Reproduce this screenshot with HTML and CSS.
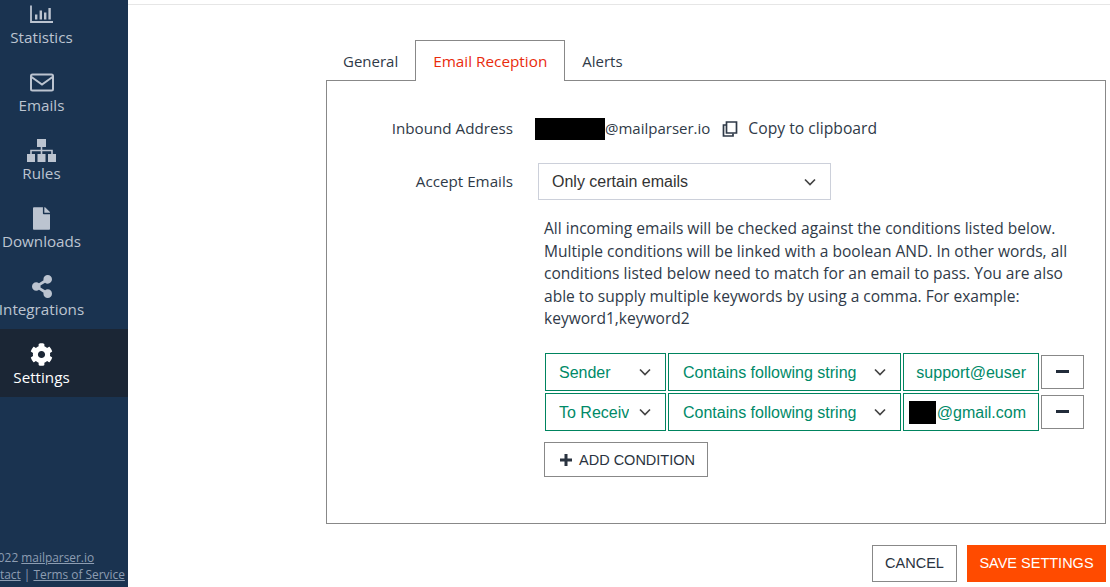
FILE: index.html
```html
<!DOCTYPE html>
<html>
<head>
    <meta charset="UTF-8">
    <title>Mailparser - Settings</title>
    <link rel="stylesheet" href="styles.css">
</head>
<body>
    <div class="app">
        <nav class="sidebar">
            <a class="nav-item">
                <svg class="nav-icon" width="24" height="18" viewBox="0 0 24 18"><path d="M1 0v16.500h22" fill="none" stroke="currentColor" stroke-width="1.800"/><path d="M5 9h2.400v5H5zM9.600 5h2.400v9H9.600zM14 7h2.400v7H14zM18.400 2.500h2.400V14h-2.400z" fill="currentColor"/></svg>
                <span>Statistics</span>
            </a>
            <a class="nav-item">
                <svg class="nav-icon" width="24" height="18" viewBox="0 0 24 18"><rect x="1" y="1" width="22" height="16" rx="1.500" fill="none" stroke="currentColor" stroke-width="2"/><path d="M1.500 3.500l10.500 7.500 10.500-7.500" fill="none" stroke="currentColor" stroke-width="2"/></svg>
                <span>Emails</span>
            </a>
            <a class="nav-item">
                <svg class="nav-icon" width="29" height="23" viewBox="0 0 29 23"><path d="M10 0h9v8h-9zM0 15h8v8H0zM10.500 15h8v8h-8zM21 15h8v8h-8z" fill="currentColor"/><path d="M14.500 8v7M4 15v-3.500h21V15" fill="none" stroke="currentColor" stroke-width="1.600"/></svg>
                <span>Rules</span>
            </a>
            <a class="nav-item">
                <svg class="nav-icon" width="17" height="23" viewBox="0 0 384 512"><path fill="currentColor" d="M224 136V0H24C10.700 0 0 10.700 0 24v464c0 13.300 10.700 24 24 24h336c13.300 0 24-10.700 24-24V160H248c-13.200 0-24-10.800-24-24zm160-14.100v6.100H256V0h6.100c6.400 0 12.500 2.500 17 7l97.900 98c4.500 4.500 7 10.600 7 16.900z"/></svg>
                <span>Downloads</span>
            </a>
            <a class="nav-item">
                <svg class="nav-icon" width="20" height="23" viewBox="0 0 448 512"><path fill="currentColor" d="M352 320c-22.608 0-43.387 7.819-59.790 20.895l-102.486-64.054a96.551 96.551 0 0 0 0-41.683l102.486-64.054C308.613 184.181 329.392 192 352 192c53.019 0 96-42.981 96-96S405.019 0 352 0s-96 42.981-96 96c0 7.158.79 14.130 2.276 20.841L155.790 180.895C139.387 167.819 118.608 160 96 160c-53.019 0-96 42.981-96 96s42.981 96 96 96c22.608 0 43.387-7.819 59.790-20.895l102.486 64.054A96.301 96.301 0 0 0 256 416c0 53.019 42.981 96 96 96s96-42.981 96-96-42.981-96-96-96z"/></svg>
                <span>Integrations</span>
            </a>
            <a class="nav-item active">
                <svg class="nav-icon" width="23" height="23" viewBox="0 0 512 512"><path fill="currentColor" d="M487.400 315.700l-42.600-24.600c4.300-23.200 4.300-47 0-70.200l42.600-24.600c4.900-2.800 7.100-8.600 5.500-14-11.100-35.600-30-67.800-54.700-94.600-3.800-4.100-10-5.100-14.800-2.300L380.800 110c-17.900-15.400-38.500-27.300-60.800-35.100V25.800c0-5.600-3.900-10.500-9.400-11.700-36.700-8.200-74.300-7.800-109.200 0-5.500 1.200-9.400 6.100-9.400 11.700V75c-22.200 7.900-42.800 19.800-60.800 35.100L88.700 85.500c-4.900-2.800-11-1.900-14.800 2.300-24.700 26.700-43.600 58.900-54.700 94.600-1.700 5.400.6 11.200 5.500 14L67.300 221c-4.300 23.200-4.300 47 0 70.200l-42.600 24.600c-4.900 2.800-7.100 8.600-5.500 14 11.100 35.600 30 67.800 54.700 94.600 3.800 4.100 10 5.100 14.800 2.300l42.600-24.600c17.900 15.400 38.500 27.300 60.800 35.100v49.200c0 5.600 3.900 10.500 9.400 11.700 36.700 8.200 74.300 7.800 109.200 0 5.500-1.200 9.400-6.100 9.400-11.700v-49.200c22.200-7.900 42.800-19.800 60.800-35.100l42.600 24.600c4.900 2.800 11 1.900 14.800-2.300 24.700-26.700 43.600-58.900 54.700-94.600 1.500-5.500-.7-11.300-5.600-14.100zM256 336c-44.100 0-80-35.900-80-80s35.900-80 80-80 80 35.900 80 80-35.900 80-80 80z"/></svg>
                <span>Settings</span>
            </a>
            <div class="sidebar-footer">
                <div>&copy; 2022 <a href="#">mailparser.io</a></div>
                <div><a href="#">Contact</a> | <a href="#">Terms of Service</a></div>
            </div>
        </nav>

        <main class="content">
            <div class="tabs">
                <a class="tab">General</a>
                <a class="tab active">Email Reception</a>
                <a class="tab">Alerts</a>
            </div>

            <section class="panel">
                <div class="form-row">
                    <div class="form-label inbound-label">Inbound Address</div>
                    <div class="address">
                        <span class="redacted redacted-address"></span><span class="address-text">@mailparser.io</span>
                        <a class="copy-link">
                            <svg width="16" height="16" viewBox="0 0 16 16"><path d="M4.500 1h10v11h-10z" fill="none" stroke="currentColor" stroke-width="1.700"/><path d="M4 4H1.500v11h9.500v-2.500" fill="none" stroke="currentColor" stroke-width="1.700"/></svg>
                            <span>Copy to clipboard</span>
                        </a>
                    </div>
                </div>

                <div class="form-row accept-row">
                    <div class="form-label accept-label">Accept Emails</div>
                    <select class="accept-select">
                        <option>Only certain emails</option>
                    </select>
                </div>

                <p class="help-text">All incoming emails will be checked against the conditions listed below. Multiple conditions will be linked with a boolean AND. In other words, all conditions listed below need to match for an email to pass. You are also able to supply multiple keywords by using a comma. For example: keyword1,keyword2</p>

                <div class="conditions">
                    <div class="condition">
                        <select class="cond-field"><option>Sender</option></select>
                        <select class="cond-type"><option>Contains following string</option></select>
                        <div class="cond-value">support@euser</div>
                        <button class="remove-btn" type="button"><span class="minus"></span></button>
                    </div>
                    <div class="condition">
                        <select class="cond-field"><option>To Receiver</option></select>
                        <select class="cond-type"><option>Contains following string</option></select>
                        <div class="cond-value"><span class="redacted redacted-value"></span>@gmail.com</div>
                        <button class="remove-btn" type="button"><span class="minus"></span></button>
                    </div>
                </div>

                <button class="add-btn" type="button">
                    <svg width="14" height="14" viewBox="0 0 14 14"><path d="M7 1v12M1 7h12" stroke="currentColor" stroke-width="3"/></svg>
                    ADD CONDITION
                </button>
            </section>

            <div class="actions">
                <button class="cancel-btn" type="button">CANCEL</button>
                <button class="save-btn" type="button">SAVE SETTINGS</button>
            </div>
        </main>
    </div>
</body>
</html>
```

FILE: styles.css
```css
html, body { margin: 0; height: 100%; overflow: hidden; }
body { background: #fff; font-family: "Open Sans", "Noto Sans", sans-serif; font-size: 15.2px; color: #2f3a48; }
.app { display: flex; height: 587px; }

.sidebar {
    width: 128px; flex: none; background: #1a3350; color: #bcc4d0;
    display: flex; flex-direction: column; overflow: hidden;
}
.nav-item {
    height: 68px; flex: none; box-sizing: border-box; padding: 14px 45px 0 0;
    display: flex; flex-direction: column; align-items: center; justify-content: flex-start;
    white-space: nowrap;
}
.nav-item:first-child { margin-top: -11px; }
.nav-icon { height: 23px; display: block; margin-bottom: 1px; }
.nav-item span { line-height: 20px; }
.nav-item.active { background: #1b2635; color: #fff; }
.sidebar-footer {
    margin-top: auto; margin-left: -22px; padding-bottom: 4px;
    font-size: 11.9px; line-height: 17px; white-space: nowrap; color: #8d9db2;
}
.sidebar-footer a { color: #8d9db2; text-decoration: underline; }

.content { flex: 1; margin-top: 4px; border-top: 1px solid #e6e6e6; padding: 35px 4px 0 198px; min-width: 0; }

.tabs { display: flex; margin-bottom: -1px; }
.tab { padding: 0 16px; height: 40px; line-height: 40px; font-size: 15px; border: 1px solid transparent; border-bottom: 0; }
.tab.active { padding: 0 17px; font-size: 15.3px; color: #e92b0c; background: #fff; border-color: #888; position: relative; z-index: 1; }

.panel { border: 1px solid #888; padding: 37px 0 46px 0; }
.form-row { display: flex; align-items: center; }
.form-label { width: 186px; text-align: right; margin-right: 22px; flex: none; }
.inbound-label, .address-text, .copy-link span { padding-bottom: 2px; }
.accept-label { padding-bottom: 1px; }
.address { display: flex; align-items: center; height: 22px; color: #2f3a48; }
.address-text { font-size: 15px; }
.redacted { display: inline-block; background: #000; }
.redacted-address { width: 70px; height: 22px; }
.copy-link { display: flex; align-items: center; gap: 10px; margin-left: 12px; }
.copy-link span { font-size: 15.7px; }

select {
    appearance: none; border-radius: 0; background-color: #fff; font-family: "Liberation Sans", Arial, sans-serif;
    font-size: 16px; outline: none;
    background-image: url("data:image/svg+xml,%3Csvg xmlns='http://www.w3.org/2000/svg' width='12' height='8' viewBox='0 0 12 8'%3E%3Cpath d='M1 1.500l5 5 5-5' fill='none' stroke='%23444' stroke-width='1.700'/%3E%3C/svg%3E");
    background-repeat: no-repeat;
}
.accept-row { margin-top: 23px; }
.accept-select {
    width: 293px; height: 37px; margin-left: 3px; padding: 0 30px 0 13px;
    border: 1px solid #ccd0da; color: #333; background-position: right 14px center;
}

.help-text { margin: 17px 0 23px 217px; width: 530px; line-height: 22.5px; font-size: 15.55px; }

.conditions { margin-left: 218px; display: flex; flex-direction: column; gap: 2px; }
.condition { display: flex; align-items: center; gap: 2px; }
.cond-field, .cond-type, .cond-value {
    height: 38px; box-sizing: border-box; border: 1px solid #00845f; color: #008a68;
    background-position: right 14px center;
}
.cond-field { width: 121px; padding: 2px 36px 0 13px; }
.cond-type { width: 233px; padding: 2px 30px 0 14px; }
.cond-value {
    width: 136px; display: flex; align-items: center; justify-content: flex-end; padding: 2px 12px 0 0;
    font-family: "Liberation Sans", Arial, sans-serif; font-size: 16px; white-space: nowrap;
}
.redacted-value { width: 27px; height: 23px; margin-right: 1px; margin-top: -1px; }
.remove-btn {
    width: 43px; height: 34px; padding: 0; background: #fff; border: 1px solid #888;
    display: flex; align-items: center; justify-content: center;
}
.minus { width: 13px; height: 3px; background: #222c3a; }

.add-btn {
    display: flex; align-items: center; gap: 6px; margin: 11px 0 0 217px; width: 164px; height: 35px;
    padding: 2px 0 0 14px; background: #fff; border: 1px solid #888; color: #2a3340;
    font-family: "Liberation Sans", Arial, sans-serif; font-size: 14.5px;
}

.actions { display: flex; justify-content: flex-end; gap: 10px; margin-top: 21px; }
.cancel-btn, .save-btn {
    height: 37px; font-family: "Liberation Sans", Arial, sans-serif; font-size: 14.5px; padding: 0;
}
.cancel-btn { width: 85px; background: #fff; border: 1px solid #888; color: #2a3340; }
.save-btn { width: 139px; background: #ff4b00; border: 0; color: #fff; }
```
